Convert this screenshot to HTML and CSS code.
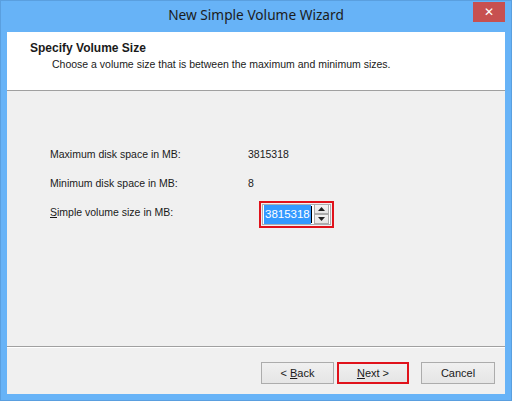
FILE: index.html
```html
<!DOCTYPE html>
<html>
<head>
<meta charset="utf-8">
<link rel="stylesheet" href="styles.css">
</head>
<body>
<div class="window">
  <div class="titlebar">
    <div></div>
    <div class="title">New Simple Volume Wizard</div>
    <div class="close-wrap"><div class="close">&#x2715;</div></div>
  </div>
  <div class="client">
    <div class="header">
      <div class="h-title">Specify Volume Size</div>
      <div class="h-sub">Choose a volume size that is between the maximum and minimum sizes.</div>
    </div>
    <div class="body">
      <div class="row"><span class="label">Maximum disk space in MB:</span><span class="value">3815318</span></div>
      <div class="row"><span class="label">Minimum disk space in MB:</span><span class="value">8</span></div>
      <div class="row row-spin"><span class="label"><u>S</u>imple volume size in MB:</span>
        <div class="spin-hl">
          <div class="spin">
            <div class="field"><span class="sel">3815318</span><span class="caret"></span></div>
            <div class="arrows">
              <div class="arr"><svg width="7" height="4" viewBox="0 0 7 4"><path d="M0 4 L3.5 0 L7 4 Z" fill="#222"/></svg></div>
              <div class="arr"><svg width="7" height="4" viewBox="0 0 7 4"><path d="M0 0 L3.5 4 L7 0 Z" fill="#222"/></svg></div>
            </div>
          </div>
        </div>
      </div>
    </div>
    <div class="footer">
      <div class="btn"><span>&lt;&nbsp;<u>B</u>ack</span></div>
      <div class="btn btn-next"><span><u>N</u>ext&nbsp;&gt;</span></div>
      <div class="btn btn-cancel"><span>Cancel</span></div>
    </div>
  </div>
</div>
</body>
</html>
```
FILE: styles.css
```css
* { box-sizing: border-box; }
html, body { margin: 0; padding: 0; }
body { width: 512px; height: 401px; overflow: hidden; font-family: "Liberation Sans", Arial, sans-serif; font-size: 10.5px; color: #1a1a1a; }
.window {
  width: 512px; height: 401px;
  background: #67b3f7;
  border: 1px solid #5a9fdf;
  padding: 0 6px 6px 6px;
  display: flex; flex-direction: column;
}
.titlebar {
  height: 31px;
  display: grid;
  grid-template-columns: 1fr auto 1fr;
  align-items: start;
}
.title {
  font-family: "Noto Sans", "Open Sans", sans-serif;
  font-size: 13.7px;
  color: #1c1c1c;
  padding-top: 4px;
  line-height: 20px;
}
.close-wrap { display: flex; justify-content: flex-end; }
.close {
  width: 32px; height: 20px;
  margin-top: 1px;
  background: #c75050;
  color: #fff;
  font-size: 12px;
  font-weight: bold;
  display: flex; align-items: center; justify-content: center;
  font-family: "DejaVu Sans", sans-serif;
}
.client {
  flex: 1;
  background: #f0f0f0;
  display: flex; flex-direction: column;
}
.header {
  height: 59px;
  background: #fff;
  border-bottom: 1px solid #a0a0a0;
  padding: 8px 0 0 23px;
}
.h-title { font-weight: bold; font-size: 12px; line-height: 16px; }
.h-sub { padding-left: 22px; line-height: 16px; }
.body {
  flex: 1;
  padding: 48px 0 0 43px;
  border-bottom: 1px solid #a0a0a0;
  box-shadow: 0 1px 0 #fff;
}
.row { display: flex; align-items: center; height: 29px; }
.label { width: 198px; }
.spin-hl {
  margin-left: 11px;
  margin-top: 5px;
  border: 2px solid #e0121b;
  width: 75px; height: 27px;
  padding: 1px;
  display: flex;
}
.spin {
  flex: 1;
  display: flex; align-items: center;
  background: #fff;
  border: 1px solid #abadb3;
  padding: 1px;
}
.field { flex: 1; display: flex; align-items: center; height: 19px; }
.sel { background: #3399ff; color: #fff; font-size: 11.5px; line-height: 19px; padding: 0 1px; }
.caret { width: 1px; height: 17px; background: #000; }
.arrows { display: flex; flex-direction: column; }
.arr {
  width: 15px; height: 10px;
  border: 1px solid #acacac;
  background: linear-gradient(#f2f2f2, #e5e5e5);
  display: flex; align-items: center; justify-content: center;
}
.footer {
  height: 47px;
  display: flex;
  align-items: flex-start;
  padding: 15px 0 0 254px;
}
.btn {
  width: 73px; height: 22px;
  border: 1px solid #acacac;
  background: linear-gradient(#f0f0f0, #e5e5e5);
  display: flex; align-items: center; justify-content: center;
  font-size: 11px;
}
.btn-next {
  margin-left: 3px;
  border: 2px solid #e0121b;
  width: 72px;
}
.btn-cancel { margin-left: 12px; width: 74px; }
u { text-decoration-thickness: 1px; text-underline-offset: 1px; }
```
